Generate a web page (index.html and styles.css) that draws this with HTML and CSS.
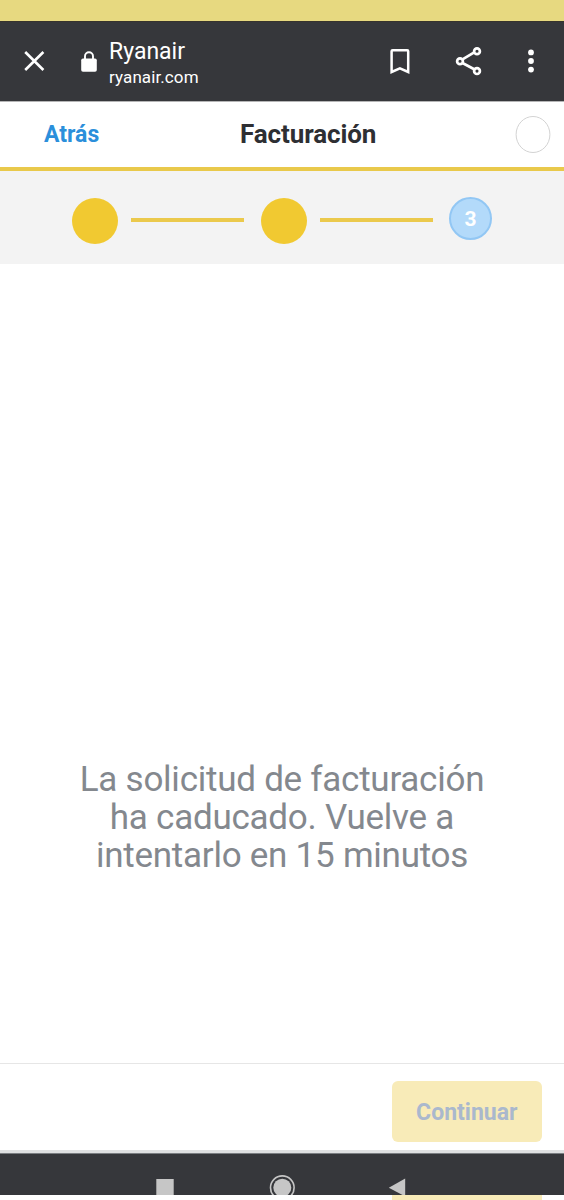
FILE: index.html
```html
<!DOCTYPE html>
<html lang="es">
<head>
    <meta charset="UTF-8">
    <meta name="viewport" content="width=device-width, initial-scale=1.0">
    <title>Ryanair - Facturación</title>
    <link rel="stylesheet" href="styles.css">
</head>
<body>
    <div class="status-bar"></div>

    <div class="browser-bar">
        <svg class="icon-close" width="22" height="22" viewBox="0 0 22 22">
            <path d="M2.2 2L20.4 20M20.4 2L2.2 20" stroke="#fff" stroke-width="2.6" fill="none"/>
        </svg>
        <svg class="icon-lock" width="16" height="21" viewBox="0 0 16 21">
            <path d="M4 9V5.3a4 4 0 0 1 8 0V9" stroke="#fff" stroke-width="1.9" fill="none"/>
            <rect x="0.2" y="7.5" width="15.6" height="13.3" rx="1.8" fill="#fff"/>
        </svg>
        <div class="site">
            <div class="site-title">Ryanair</div>
            <div class="site-url">ryanair.com</div>
        </div>
        <svg class="icon-bookmark" width="22" height="27" viewBox="0 0 22 27">
            <path d="M2.6 24V3.2q0-1 1-1H18.2q1 0 1 1V24L10.9 20.4Z" stroke="#fff" stroke-width="2.5" fill="none"/>
        </svg>
        <svg class="icon-share" width="28" height="30" viewBox="0 0 28 30">
            <g stroke="#fff" stroke-width="2.7" fill="none">
                <path d="M7.5 13.3L19.2 6.4M7.5 17L19.2 23.3"/>
                <circle cx="5" cy="15.2" r="2.9"/>
                <circle cx="22" cy="5.2" r="2.9"/>
                <circle cx="22" cy="25.1" r="2.9"/>
            </g>
        </svg>
        <svg class="icon-menu" width="6" height="24" viewBox="0 0 6 24">
            <g fill="#fff">
                <circle cx="3" cy="3.4" r="2.9"/>
                <circle cx="3" cy="12" r="2.9"/>
                <circle cx="3" cy="20.6" r="2.9"/>
            </g>
        </svg>
    </div>

    <header>
        <a href="#" class="back">Atrás</a>
        <h1>Facturación</h1>
        <svg class="avatar" width="36" height="38" viewBox="0 0 36 38">
            <ellipse cx="18" cy="18.5" rx="16.9" ry="18" fill="#fff" stroke="#d3d3d3"/>
        </svg>
    </header>

    <div class="stepper">
        <span class="step done"></span>
        <span class="line"></span>
        <span class="step done"></span>
        <span class="line"></span>
        <span class="step current">3</span>
    </div>

    <main>
        <p class="message">La solicitud de facturación<br>ha caducado. Vuelve a<br>intentarlo en 15 minutos</p>
    </main>

    <footer>
        <button class="continue" disabled>Continuar</button>
    </footer>

    <svg class="nav-bar" width="564" height="42" viewBox="0 0 564 41">
        <g fill="#c6c6c6">
            <rect x="156.3" y="25" width="17.4" height="16"/>
            <circle cx="282.3" cy="33.7" r="9"/>
            <circle cx="282.3" cy="33.7" r="11.8" fill="none" stroke="#c6c6c6" stroke-width="1.6"/>
            <path d="M405.2 24.5V41H402.5L388.8 33.7Z"/>
        </g>
    </svg>
    <div class="bottom-strip"><span></span></div>
</body>
</html>
```
FILE: styles.css
```css
* {
    box-sizing: border-box;
}

body {
    font-family: Roboto, sans-serif;
    margin: 0;
    background-color: #fff;
    width: 564px;
    height: 1200px;
    display: flex;
    flex-direction: column;
    overflow: hidden;
}

svg {
    display: block;
    flex-shrink: 0;
}

.status-bar {
    height: 21px;
    background-color: #e7d980;
}

/* Browser toolbar */
.browser-bar {
    height: 80px;
    background-color: #36373b;
    border-top: 1px solid #37332d;
    color: #fff;
    display: flex;
    align-items: center;
    padding: 0 0 1px 23px;
}

.icon-lock {
    margin-left: 36px;
}

.site {
    width: 280px;
    margin-left: 12px;
    padding-top: 4px;
}

.site-title {
    font-size: 23px;
    line-height: 27px;
}

.site-url {
    font-size: 17px;
    line-height: 24px;
    letter-spacing: 0.1px;
}

.icon-share {
    margin-left: 44px;
}

.icon-menu {
    margin-left: 45px;
}

/* Page header */
header {
    height: 70px;
    border-top: 1px solid #b5b5b6;
    border-bottom: 4px solid #e9c94b;
    display: grid;
    grid-template-columns: 196px 1fr 36px;
    align-items: center;
    padding: 0 13px 0 44px;
}

.back {
    color: #2b8fdb;
    font-size: 23px;
    font-weight: 700;
    line-height: 27px;
    padding-bottom: 1px;
    text-decoration: none;
}

h1 {
    margin: 0;
    padding-bottom: 2px;
    font-size: 26px;
    font-weight: 700;
    letter-spacing: -0.1px;
    color: #2e2f33;
}

/* Progress steps */
.stepper {
    height: 93px;
    background-color: #f3f3f3;
    display: flex;
    align-items: center;
    padding: 5px 72px 0 72.4px;
}

.step {
    border-radius: 50%;
    flex-shrink: 0;
}

.step.done {
    width: 46px;
    height: 46px;
    margin-top: 2px;
    background-color: #f1c931;
}

.step.current {
    width: 43px;
    height: 43px;
    margin-bottom: 4px;
    padding-top: 1px;
    background-color: #b3dafa;
    border: 2px solid #92c7f4;
    color: #fff;
    font-size: 21px;
    font-weight: 700;
    display: flex;
    align-items: center;
    justify-content: center;
}

.line {
    width: 113px;
    height: 4px;
    margin: 0 16.3px 0 13px;
    background-color: #ebc94c;
}

main {
    flex: 1;
    display: flex;
    align-items: flex-end;
    justify-content: center;
    padding-bottom: 188px;
}

.message {
    margin: 0;
    font-size: 35px;
    line-height: 38px;
    letter-spacing: -0.25px;
    color: #84888e;
    text-align: center;
}

footer {
    height: 90px;
    border-top: 1px solid #e6e6e6;
    border-bottom: 3px solid #dfe0e1;
    display: flex;
    justify-content: flex-end;
    padding: 17px 22px 0 0;
}

.continue {
    width: 150.5px;
    height: 61px;
    padding: 1px 0 0;
    border: none;
    border-radius: 6px;
    background-color: #f8ebb8;
    color: #aab8cd;
    font-family: inherit;
    font-size: 23px;
    font-weight: 700;
}

.nav-bar {
    background-color: #36373b;
    border-top: 1px solid #7b7e82;
}

.bottom-strip {
    height: 5px;
    padding-left: 392px;
}

.bottom-strip span {
    display: block;
    width: 150px;
    height: 5px;
    background-color: #f8ebb8;
}
```
